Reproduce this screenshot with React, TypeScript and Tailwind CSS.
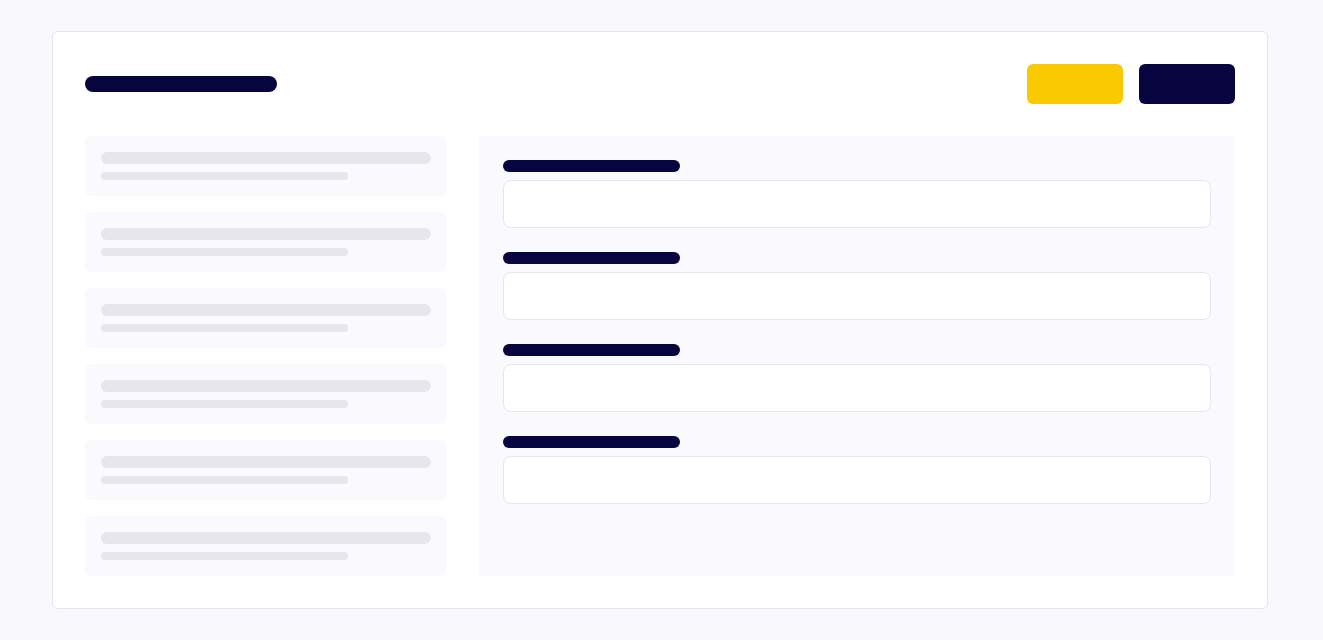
import React from 'react';

const ITEMS = [0, 1, 2, 3, 4, 5];
const FIELDS = [0, 1, 2, 3];

function ListSkeleton() {
  return (
    <div className="flex flex-col gap-4">
      {ITEMS.map((i) => (
        <div key={i} className="h-[60px] rounded-md bg-[#fafafe] p-4">
          <div className="h-3 w-full rounded-full bg-[#e6e6ec]" />
          <div className="mt-2 h-2 w-[247px] rounded-full bg-[#e6e6ec]" />
        </div>
      ))}
    </div>
  );
}

function FormSkeleton() {
  return (
    <div className="col-span-2 flex flex-col gap-6 bg-[#f9f9fe] p-6">
      {FIELDS.map((i) => (
        <div key={i} className="flex flex-col gap-2">
          <div className="h-3 w-[177px] rounded-full bg-[#07043f]" />
          <div className="h-12 rounded-lg border border-[#e6e6ee] bg-white" />
        </div>
      ))}
    </div>
  );
}

export default function App() {
  return (
    <main className="min-h-screen bg-[#f8f8fd] pt-[31px]">
      <div className="ml-[52px] w-[1216px] rounded-md border border-[#e4e4ec] bg-white p-8">
        {/* Header */}
        <div className="flex h-10 items-center justify-between">
          <div className="h-4 w-[192px] rounded-full bg-[#07043f]" />
          <div className="flex gap-4">
            <div className="h-10 w-24 rounded-md bg-[#f9ca02]" />
            <div className="h-10 w-24 rounded-md bg-[#07043f]" />
          </div>
        </div>

        <div className="mt-8 grid h-[440px] grid-cols-3 gap-8 overflow-hidden">
          <ListSkeleton />
          <FormSkeleton />
        </div>
      </div>
    </main>
  );
}
